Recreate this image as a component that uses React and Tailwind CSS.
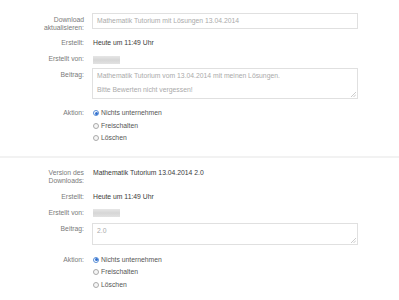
import React from "react";

const font = { fontFamily: '"Liberation Sans", Arial, sans-serif' };

function Label({ children, className = "" }) {
  return (
    <div className={"w-[84px] shrink-0 text-right text-[#7a7a7a] " + className}>{children}</div>
  );
}

function Radio({ checked, label }) {
  return (
    <div className="flex h-[12.5px] items-center">
      <span
        className={
          "relative flex h-[6px] w-[6px] items-center justify-center rounded-full border-[0.5px] " +
          (checked ? "border-[#5a8fd6] bg-white" : "border-[#aaa] bg-[#f6f6f6]")
        }
      >
        {checked && <span className="h-[3px] w-[3px] rounded-full bg-[#2f6fd0]" />}
      </span>
      <span className="ml-[2px] text-[#555]">{label}</span>
    </div>
  );
}

function Grip() {
  return (
    <svg className="absolute bottom-[1px] right-[1px]" width="5" height="5" viewBox="0 0 5 5">
      <path d="M5 0L0 5M5 2.5L2.5 5" stroke="#aaa" strokeWidth="0.6" />
    </svg>
  );
}

function Blob({ className = "" }) {
  return (
    <div
      className={
        "ml-[9px] h-[8px] w-[27px] bg-gradient-to-b from-[#e6e6e6] via-[#d6d6d6] to-[#e2e2e2] " + className
      }
    />
  );
}

function Actions() {
  return (
    <div className="flex">
      <Label className="leading-[12.5px]">Aktion:</Label>
      <div className="ml-[9px]">
        <Radio checked label="Nichts unternehmen" />
        <Radio label="Freischalten" />
        <Radio label="Löschen" />
      </div>
    </div>
  );
}

export default function App() {
  return (
    <div className="h-[300px] w-[399px] overflow-hidden bg-white text-[6.8px] leading-[8px]" style={font}>
      {/* Section 1 */}
      <div className="flex flex-col">
        <div className="mt-[13px] flex items-start">
          <Label className="pt-[3px]">
            Download
            <br />
            aktualisieren:
          </Label>
          <div className="ml-[8px] flex h-[16px] w-[266px] items-center border border-[#e0e0e0] px-[4px] text-[#aaa]">
            Mathematik Tutorium mit Lösungen 13.04.2014
          </div>
        </div>
        <div className="mt-[7px] flex">
          <Label>Erstellt:</Label>
          <div className="ml-[9px] text-[#3a3a3a]">Heute um 11:49 Uhr</div>
        </div>
        <div className="mt-[8px] flex items-start">
          <Label>Erstellt von:</Label>
          <Blob className="mt-[1px]" />
        </div>
        <div className="mt-[4px] flex items-start">
          <Label className="pt-[3px]">Beitrag:</Label>
          <div className="relative ml-[8px] h-[31px] w-[266px] border border-[#e0e0e0] px-[4px] pt-[3px] text-[#aaa]">
            <div>Mathematik Tutorium vom 13.04.2014 mit meinen Lösungen.</div>
            <div className="mt-[6px]">Bitte Bewerten nicht vergessen!</div>
            <Grip />
          </div>
        </div>
        <div className="mt-[8px]">
          <Actions />
        </div>
      </div>

      <div className="mt-[11.5px] h-[2px] w-full bg-[#f2f2f2]" />

      {/* Section 2 */}
      <div className="flex flex-col">
        <div className="mt-[11px] flex items-start">
          <Label>
            Version des
            <br />
            Downloads:
          </Label>
          <div className="ml-[9px] text-[#3a3a3a]">Mathematik Tutorium 13.04.2014 2.0</div>
        </div>
        <div className="mt-[8px] flex">
          <Label>Erstellt:</Label>
          <div className="ml-[9px] text-[#3a3a3a]">Heute um 11:49 Uhr</div>
        </div>
        <div className="mt-[8px] flex items-start">
          <Label>Erstellt von:</Label>
          <Blob />
        </div>
        <div className="mt-[6px] flex items-start">
          <Label className="pt-[2px]">Beitrag:</Label>
          <div className="relative ml-[8px] h-[22px] w-[266px] border border-[#e0e0e0] px-[4px] pt-[3px] text-[#aaa]">
            <div>2.0</div>
            <Grip />
          </div>
        </div>
        <div className="mt-[8.5px]">
          <Actions />
        </div>
      </div>
    </div>
  );
}
